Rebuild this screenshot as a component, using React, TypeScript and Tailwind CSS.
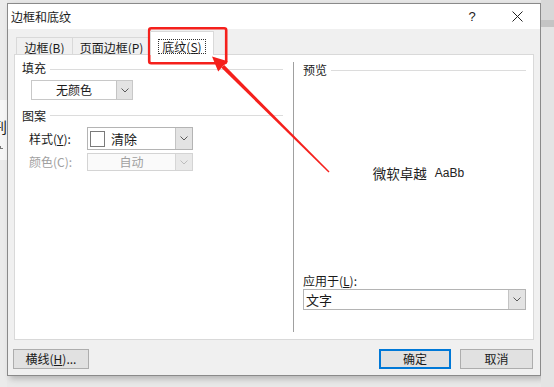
import React from "react";

const Chevron = ({ color = "#5a5a5a" }: { color?: string }) => (
  <svg width="8" height="5" viewBox="0 0 8 5">
    <polyline points="0.5,0.5 4,4 7.5,0.5" fill="none" stroke={color} strokeWidth="1" />
  </svg>
);

const ArrowBox = ({ w, disabled }: { w: string; disabled?: boolean }) => (
  <div
    className={
      disabled
        ? `${w} flex items-center justify-center bg-[#e9e9e9] border-l border-[#d6d6d6]`
        : `${w} flex items-center justify-center bg-[#e3e3e3] border-l border-[#c4c4c4]`
    }
  >
    <Chevron color={disabled ? "#bdbdbd" : "#5a5a5a"} />
  </div>
);

export default function App() {
  return (
    <div className="relative w-[554px] h-[387px] overflow-hidden bg-[#e8e8e8] flex font-['Noto_Sans_CJK_SC',sans-serif] text-[12px] leading-[14px] text-[#1a1a1a]">
      {/* left strip (document behind) */}
      <div className="w-[7px] shrink-0 flex flex-col bg-[#ebebeb]">
        <div className="h-[100px]" />
        <div className="h-[60px] bg-[#f6f6f6] overflow-hidden pt-[18px]">
          <span className="block -ml-[8px] text-[15px] leading-[18px] text-[#222]">刑</span>
          <div className="mt-[10px] w-[3px] h-[3px] border-l border-b border-[#777]" />
        </div>
      </div>

      {/* dialog */}
      <div className="w-[534px] shrink-0 pt-[3px]">
        <div className="h-[373px] border border-[#8a8a8a] bg-[#f0f0f0] flex flex-col shadow-[3px_3px_6px_rgba(0,0,0,0.22)]">
          {/* title bar */}
          <div className="h-[25px] bg-white flex items-center pl-[3px]">
            <span className="text-[12px]">边框和底纹</span>
            <div className="flex-1" />
            <span className="w-[44px] text-center text-[13px] font-['Liberation_Sans',sans-serif] text-[#222]">?</span>
            <span className="w-[46px] flex justify-center">
              <svg width="11" height="11" viewBox="0 0 11 11">
                <line x1="0.5" y1="0.5" x2="10.5" y2="10.5" stroke="#222" strokeWidth="1" />
                <line x1="10.5" y1="0.5" x2="0.5" y2="10.5" stroke="#222" strokeWidth="1" />
              </svg>
            </span>
          </div>

          {/* body */}
          <div className="flex-1 flex flex-col">
            {/* tabs */}
            <div className="h-[25px] flex items-end pl-[8px]">
              <div className="w-[57px] h-[17px] border-l border-t border-r border-[#d9d9d9] flex items-center justify-center pt-[3px]">
                <span>边框(<u>B</u>)</span>
              </div>
              <div className="w-[77px] h-[17px] border-t border-[#d9d9d9] flex items-center justify-center pt-[3px]">
                <span>页面边框(<u>P</u>)</span>
              </div>
              <div className="relative z-10 -mb-[1px] w-[64px] h-[24px] bg-white border-l border-t border-r border-[#d9d9d9] flex items-start justify-center pt-[8px]">
                <span className="leading-[13px] px-[3px] outline outline-1 outline-dotted outline-[#333]">
                  底纹(<u>S</u>)
                </span>
              </div>
            </div>

            {/* panel */}
            <div className="mx-[6px] h-[286px] bg-white border border-[#d9d9d9] flex">
              {/* left column */}
              <div className="w-[278px] flex flex-col">
                <div className="mt-[6px] h-[14px] flex items-center pl-[7px] pr-[10px]">
                  <span>填充</span>
                  <div className="flex-1 h-px bg-[#dcdcdc] ml-[4px] mt-[2px]" />
                </div>
                <div className="mt-[5px] ml-[16px] w-[102px] h-[20px] border border-[#c8c8c8] bg-white flex">
                  <div className="flex-1 flex items-center justify-center">无颜色</div>
                  <ArrowBox w="w-[16px]" />
                </div>

                <div className="mt-[9px] h-[14px] flex items-center pl-[7px] pr-[10px]">
                  <span>图案</span>
                  <div className="flex-1 h-px bg-[#dcdcdc] ml-[4px] -mt-[1px]" />
                </div>

                <div className="mt-[4px] h-[23px] flex items-center pl-[14px]">
                  <span className="w-[58px]">样式(<u>Y</u>):</span>
                  <div className="w-[106px] h-[23px] border border-[#b4b4b4] bg-white flex">
                    <div className="flex-1 flex items-center pl-[2px]">
                      <div className="w-[15px] h-[16px] border border-[#7a7a7a] bg-white" />
                      <span className="ml-[6px] text-[13px]">清除</span>
                    </div>
                    <ArrowBox w="w-[17px]" />
                  </div>
                </div>

                <div className="mt-[3px] h-[18px] flex items-center pl-[14px] text-[#a0a0a0]">
                  <span className="w-[58px]">颜色(C):</span>
                  <div className="w-[106px] h-[18px] border border-[#d4d4d4] bg-[#fafafa] flex">
                    <div className="flex-1 flex items-center justify-center">自动</div>
                    <ArrowBox w="w-[17px]" disabled />
                  </div>
                </div>
              </div>

              {/* divider */}
              <div className="w-px bg-[#a0a0a0] my-[7px]" />

              {/* right column */}
              <div className="flex-1 flex flex-col pl-[9px] pr-[7px] pb-[29px]">
                <div className="mt-[8px] h-[14px] flex items-center">
                  <span>预览</span>
                  <div className="flex-1 h-px bg-[#dcdcdc] ml-[4px]" />
                </div>
                <div className="flex-1 flex items-center justify-center pb-[6px] pl-[8px]">
                  <span className="text-[13.5px] leading-[16px] text-[#222]">微软卓越</span>
                  <span className="ml-[8px] text-[12px] leading-[16px] font-['Liberation_Sans',sans-serif] text-[#222]">AaBb</span>
                </div>
                <div className="h-[14px]">
                  应用于(<u>L</u>):
                </div>
                <div className="mt-[1px] h-[21px] border border-[#b4b4b4] bg-white flex">
                  <div className="flex-1 flex items-center pl-[2px] text-[13px]">文字</div>
                  <ArrowBox w="w-[17px]" />
                </div>
              </div>
            </div>

            {/* bottom buttons */}
            <div className="mt-[9px] h-[20px] flex pl-[5px] pr-[7px]">
              <div className="w-[76px] h-[20px] bg-[#e1e1e1] border border-[#adadad] flex items-center justify-center">
                横线(<u>H</u>)...
              </div>
              <div className="flex-1" />
              <div className="w-[72px] h-[20px] bg-[#e1e1e1] border-2 border-[#0078d7] flex items-center justify-center">
                确定
              </div>
              <div className="w-[73px] h-[20px] ml-[9px] bg-[#e1e1e1] border border-[#adadad] flex items-center justify-center">
                取消
              </div>
            </div>
          </div>
        </div>
      </div>

      {/* right strip */}
      <div className="flex-1 flex flex-col bg-[#e4e4e4]">
        <div className="h-[20px] bg-[#d8d8d8]" />
        <div className="h-[7px] bg-[#c4c4c4]" />
      </div>

      {/* red annotation overlay */}
      <svg
        className="absolute left-0 top-0 pointer-events-none"
        width="554"
        height="387"
        viewBox="0 0 554 387"
      >
        <rect x="149.2" y="28.2" width="77" height="35" rx="2" fill="none" stroke="#f5201c" strokeWidth="2.6" />
        <polygon
          points="221.4,67.8 224.2,65.0 329.5,171.5 328.5,172.5"
          fill="#f5201c"
        />
        <polygon points="212,56.5 227.8,61.2 222.6,66.6 218.2,71.6" fill="#f5201c" />
      </svg>
    </div>
  );
}
